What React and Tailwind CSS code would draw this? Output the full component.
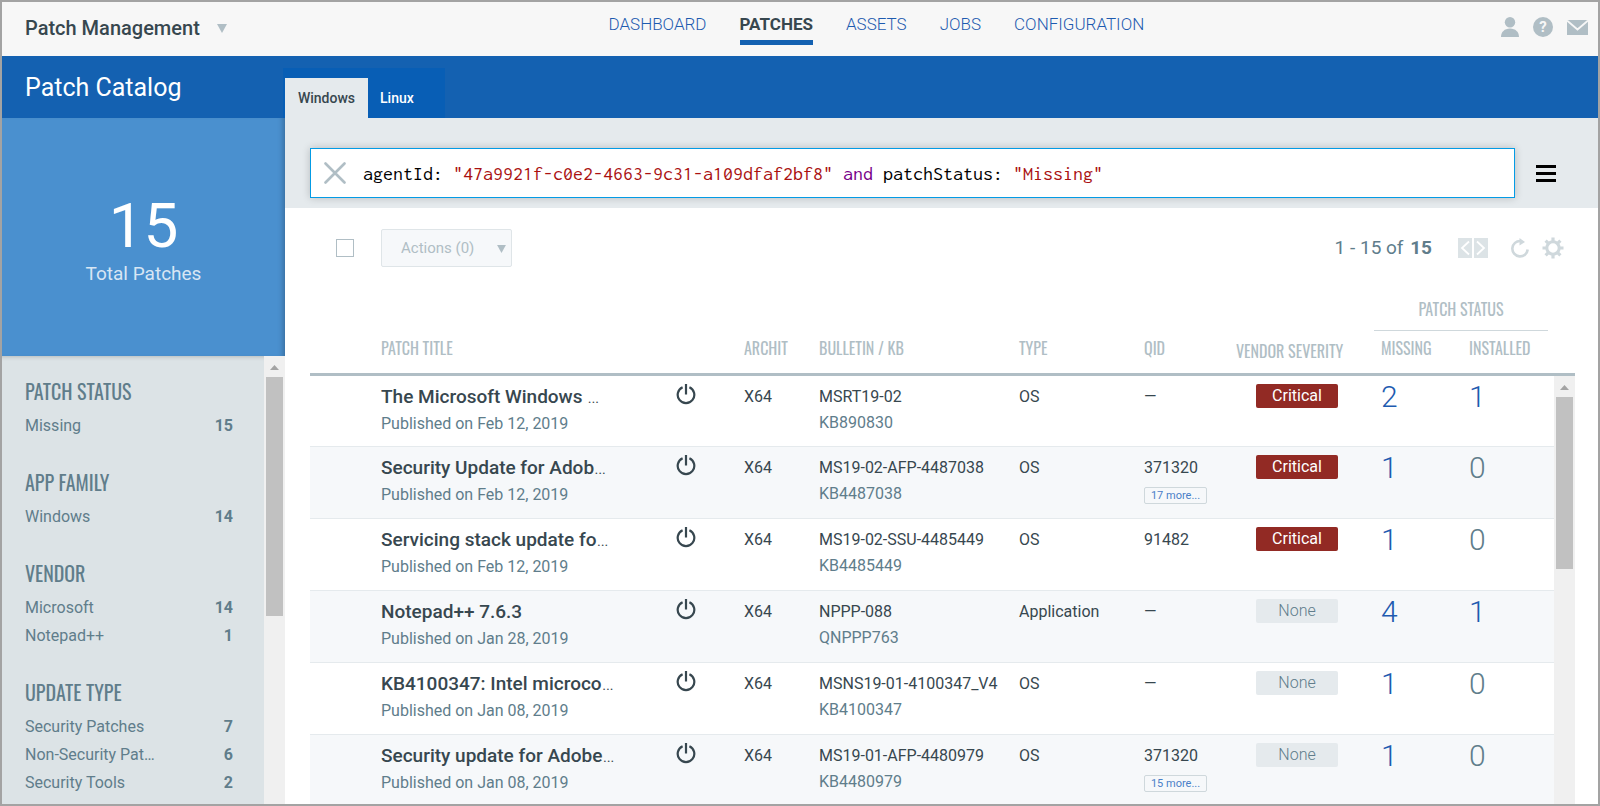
import { useState } from "react";

const navItems = ["DASHBOARD", "PATCHES", "ASSETS", "JOBS", "CONFIGURATION"];

const filters = [
  { title: "PATCH STATUS", items: [["Missing", 15]] },
  { title: "APP FAMILY", items: [["Windows", 14]] },
  { title: "VENDOR", items: [["Microsoft", 14], ["Notepad++", 1]] },
  {
    title: "UPDATE TYPE",
    items: [["Security Patches", 7], ["Non-Security Pat…", 6], ["Security Tools", 2]],
  },
];

const patches = [
  { title: "The Microsoft Windows ", cut: true, date: "Feb 12, 2019", bulletin: "MSRT19-02", kb: "KB890830", type: "OS", qid: "—", severity: "Critical", missing: 2, installed: 1 },
  { title: "Security Update for Adob", cut: true, date: "Feb 12, 2019", bulletin: "MS19-02-AFP-4487038", kb: "KB4487038", type: "OS", qid: "371320", more: 17, severity: "Critical", missing: 1, installed: 0 },
  { title: "Servicing stack update fo", cut: true, date: "Feb 12, 2019", bulletin: "MS19-02-SSU-4485449", kb: "KB4485449", type: "OS", qid: "91482", severity: "Critical", missing: 1, installed: 0 },
  { title: "Notepad++ 7.6.3", date: "Jan 28, 2019", bulletin: "NPPP-088", kb: "QNPPP763", type: "Application", qid: "—", severity: "None", missing: 4, installed: 1 },
  { title: "KB4100347: Intel microco", cut: true, date: "Jan 08, 2019", bulletin: "MSNS19-01-4100347_V4", kb: "KB4100347", type: "OS", qid: "—", severity: "None", missing: 1, installed: 0 },
  { title: "Security update for Adobe", cut: true, date: "Jan 08, 2019", bulletin: "MS19-01-AFP-4480979", kb: "KB4480979", type: "OS", qid: "371320", more: 15, severity: "None", missing: 1, installed: 0 },
];

const narrow = "font-['Oswald','Liberation_Sans_Narrow','Roboto',sans-serif] font-normal";

function Caret({ className }) {
  return (
    <svg viewBox="0 0 10 9" className={className} fill="#b0bec5" aria-hidden="true">
      <path d="M0 0h10L5 9z" />
    </svg>
  );
}

function PowerIcon() {
  return (
    <svg viewBox="0 0 20 21" className="h-[21px] w-5" fill="none" stroke="#37474f" strokeWidth="2.200">
      <path d="M6.600 3.200A8.300 8.300 0 1 0 13.400 3.200" />
      <path d="M10 0v10.500" />
    </svg>
  );
}

function ScrollBar({ thumb }) {
  return (
    <div className="w-[21px] shrink-0 bg-[#f0f0f0]">
      <div className="flex h-[21px] items-center justify-center">
        <svg viewBox="0 0 9 5" className="mt-0.5 h-[5px] w-[9px]" fill="#a3a3a3">
          <path d="M0 5 4.500 0 9 5z" />
        </svg>
      </div>
      <div className={`mx-0.5 bg-[#c1c1c1] ${thumb}`} />
    </div>
  );
}

function Header() {
  return (
    <header className="flex h-[54px] shrink-0 bg-[#f7f7f7]">
      <div className="flex w-[38%] items-center gap-[17px] pb-0.5 pl-[23px]">
        <span className="text-[20px] font-medium text-[#37474f]">Patch Management</span>
        <Caret className="h-[9px] w-[10px]" />
      </div>
      <nav className="flex items-start gap-[33px] pt-3">
        {navItems.map((item) => (
          <a
            key={item}
            href="#"
            className={
              item === "PATCHES"
                ? "h-[31px] border-b-[5px] border-[#1461b1] text-[17px] leading-5 font-bold text-[#37474f]"
                : "text-[17px] leading-5 font-light text-[#1e5bb0]"
            }
          >
            {item}
          </a>
        ))}
      </nav>
      <div className="ml-auto flex items-center gap-[14px] pr-2.5 pb-1">
        <button aria-label="Account">
          <svg viewBox="0 0 18 20" className="h-5 w-[18px]" fill="#b0bec5">
            <circle cx="9" cy="5.200" r="5.200" />
            <path d="M0 20c0-5 3.500-8.500 9-8.500s9 3.500 9 8.500z" />
          </svg>
        </button>
        <button aria-label="Help" className="flex size-5 items-center justify-center rounded-full bg-[#b0bec5] text-[15px] leading-5 font-bold text-[#f7f7f7]">
          ?
        </button>
        <button aria-label="Messages">
          <svg viewBox="0 0 21 15" className="h-[15px] w-[21px]">
            <path d="M0 0h21v15H0z" fill="#b0bec5" />
            <path d="M0 .5 10.500 9.500 21 .5" fill="none" stroke="#f7f7f7" strokeWidth="1.800" />
          </svg>
        </button>
      </div>
    </header>
  );
}

function Sidebar() {
  return (
    <aside className="flex w-[283px] shrink-0 flex-col">
      <div className="flex h-[238px] shrink-0 flex-col items-center bg-[#4a90cf] pt-[76px] shadow-[inset_-6px_0_6px_-5px_rgba(0,0,0,0.3)]">
        <div className="text-[62px] leading-[64px] text-white">15</div>
        <div className="mt-0.5 text-[19px] leading-7 text-[#d8e6f4]">Total Patches</div>
      </div>
      <div className="flex min-h-0 flex-1">
        <div className="min-w-0 flex-1 bg-[#dce3e6] pt-[21px] pr-[31px] pl-[23px] text-[#607d8b] shadow-[inset_0_5px_5px_-5px_rgba(0,0,0,0.25)]">
          {filters.map((group) => (
            <section key={group.title} className="mb-7">
              <h3 className={`mb-[7px] text-[20px] leading-7 ${narrow}`}>{group.title}</h3>
              {group.items.map(([name, count]) => (
                <a key={name} href="#" className="flex h-7 items-center justify-between text-[16px]">
                  <span>{name}</span>
                  <span className="font-bold">{count}</span>
                </a>
              ))}
            </section>
          ))}
        </div>
        <ScrollBar thumb="h-[239px]" />
      </div>
    </aside>
  );
}

function SearchBar() {
  const [query, setQuery] = useState(
    'agentId: "47a9921f-c0e2-4663-9c31-a109dfaf2bf8" and patchStatus: "Missing"'
  );
  // split on quoted values and keywords so they can be coloured
  const parts = query.split(/("[^"]*"|\band\b|\bor\b)/);

  const color = (part) => {
    if (part.startsWith('"')) return "text-[#aa1111]";
    if (part === "and" || part === "or") return "text-[#770088]";
    return "text-black";
  };

  return (
    <div className="flex h-[90px] shrink-0 items-center bg-[#e5eaed] pt-5 pr-[42px] pl-[25px]">
      <div className="flex h-[50px] flex-1 items-center border border-[#039be5] bg-white shadow-[0_0_8px_rgba(0,0,0,0.2)]">
        <button aria-label="Clear" className="ml-[13px]">
          <svg viewBox="0 0 22 22" className="size-[22px]" stroke="#b0bec5" strokeWidth="2.600" strokeLinecap="round">
            <path d="M1.500 1.500l19 19M20.500 1.500l-19 19" />
          </svg>
        </button>
        <div className="relative ml-[17px] h-6 flex-1 font-['Inconsolata','Liberation_Mono',monospace] text-[20px] leading-[26px]">
          <div className="whitespace-pre" aria-hidden="true">
            {parts.map((part, i) => (
              <span key={i} className={color(part)}>{part}</span>
            ))}
          </div>
          <input
            aria-label="Search patches"
            value={query}
            onChange={(e) => setQuery(e.target.value)}
            className="absolute inset-0 w-full bg-transparent text-transparent caret-black outline-none"
          />
        </div>
      </div>
      <button aria-label="Menu" className="ml-[21px] flex w-5 flex-col gap-1">
        <span className="h-[3px] bg-black" />
        <span className="h-[3px] bg-black" />
        <span className="h-[3px] bg-black" />
      </button>
    </div>
  );
}

function Toolbar() {
  return (
    <div className="flex h-20 shrink-0 items-center pr-[34px] pl-[51px]">
      <input
        type="checkbox"
        aria-label="Select all"
        className="size-[18px] appearance-none border border-[#b0bec5] bg-white checked:bg-[#b0bec5]"
      />
      <div className="relative ml-[27px]">
        <select
          aria-label="Actions"
          className="h-[38px] w-[131px] appearance-none rounded-xs border border-[#dfe5e8] bg-[#f6f8fa] pl-[19px] text-[15px] text-[#b0bec5]"
        >
          <option>Actions (0)</option>
        </select>
        <Caret className="pointer-events-none absolute top-4 right-1.5 h-2 w-[9px]" />
      </div>
      <div className="ml-auto text-[19px] text-[#607d8b]">
        1 - 15 of <span className="ml-0.5 font-bold">15</span>
      </div>
      <div className="ml-[26px] flex gap-0.5">
        <button aria-label="Previous page" className="h-5 w-[14px] bg-[#dce3e6]">
          <svg viewBox="0 0 14 20" fill="none" stroke="#fff" strokeWidth="1.800">
            <path d="M11 3.500 4 10l7 6.500" />
          </svg>
        </button>
        <button aria-label="Next page" className="h-5 w-[14px] bg-[#dce3e6]">
          <svg viewBox="0 0 14 20" fill="none" stroke="#fff" strokeWidth="1.800">
            <path d="M3 3.500 10 10l-7 6.500" />
          </svg>
        </button>
      </div>
      <button aria-label="Refresh" className="ml-[22px]">
        <svg viewBox="0 0 20 20" className="size-5">
          <path d="M10.500 3A7.700 7.700 0 1 0 17.700 11.500" fill="none" stroke="#cfd8dc" strokeWidth="2.600" />
          <path d="M9.500 0 15 4l-5.500 3.500z" fill="#cfd8dc" />
        </svg>
      </button>
      <button aria-label="Settings" className="ml-3">
        <svg viewBox="0 0 22 22" className="size-[22px]">
          <circle cx="11" cy="11" r="6.200" fill="none" stroke="#cfd8dc" strokeWidth="3" />
          <path
            d="M11 .5v4M11 17.500v4M.5 11h4M17.500 11h4M3.600 3.600l2.800 2.800M15.600 15.600l2.800 2.800M3.600 18.400l2.800-2.800M15.600 6.400l2.800-2.800"
            stroke="#cfd8dc"
            strokeWidth="3.200"
          />
        </svg>
      </button>
    </div>
  );
}

function Count({ value }) {
  return (
    <a href="#" className={value ? "text-[#1e5bb0]" : "text-[#607d8b]"}>
      {value}
    </a>
  );
}

function PatchTable() {
  return (
    <div className="flex min-h-0 flex-1 overflow-hidden pr-[23px] pl-[25px]">
      <table className="min-w-0 flex-1 table-fixed border-separate border-spacing-0 self-start text-left text-[16px] text-[#37474f]">
        <colgroup>
          <col className="w-[71px]" />
          <col />
          <col className="w-[68px]" />
          <col className="w-[75px]" />
          <col className="w-[200px]" />
          <col className="w-[125px]" />
          <col className="w-[92px]" />
          <col className="w-[138px]" />
          <col className="w-[88px]" />
          <col className="w-[92px]" />
        </colgroup>
        <thead className={`text-[16px] leading-6 text-[#b0bec5] ${narrow}`}>
          <tr>
            <th colSpan="8" className="p-0" />
            <th colSpan="2" scope="colgroup" className="p-0 font-normal">
              <div className="mr-1.5 h-[43px] border-b border-[#cfd8dc] pt-[9px] text-center">PATCH STATUS</div>
            </th>
          </tr>
          <tr className="h-[45px] align-top [&>th]:border-b-[3px] [&>th]:border-[#b0bec5] [&>th]:font-normal">
            <th />
            <th scope="col" className="pt-[5px]">PATCH TITLE</th>
            <th />
            <th scope="col" className="pt-[5px]">ARCHIT</th>
            <th scope="col" className="pt-[5px]">BULLETIN / KB</th>
            <th scope="col" className="pt-[5px]">TYPE</th>
            <th scope="col" className="pt-[5px]">QID</th>
            <th scope="col" className="pt-2">VENDOR SEVERITY</th>
            <th scope="col" className="pt-[5px] pl-[7px]">MISSING</th>
            <th scope="col" className="pt-[5px] pl-[7px]">INSTALLED</th>
          </tr>
        </thead>
        <tbody>
          {patches.map((p) => (
            <tr
              key={p.bulletin}
              className="h-[72px] align-top first:h-[71px] even:bg-[#f6f8fa] [&>td]:border-b [&>td]:border-[#e5eaed] [&>td]:pt-2"
            >
              <td />
              <td>
                <div className="text-[19px] leading-[26px] font-medium">
                  {p.title}
                  {p.cut && <span className="font-light">…</span>}
                </div>
                <div className="leading-7 text-[#607d8b]">Published on {p.date}</div>
              </td>
              <td>
                <PowerIcon />
              </td>
              <td className="leading-[26px]">X64</td>
              <td className="leading-[26px]">
                <div>{p.bulletin}</div>
                <div className="text-[#607d8b]">{p.kb}</div>
              </td>
              <td className="leading-[26px]">{p.type}</td>
              <td className="leading-[26px]">
                <div>{p.qid}</div>
                {p.more && (
                  <button className="mt-1.5 block h-[17px] w-[63px] rounded-xs border border-[#cfd8dc] text-[11px] leading-[15px] text-[#4a80c8]">
                    {p.more} more...
                  </button>
                )}
              </td>
              <td className="pl-5">
                <div
                  className={
                    p.severity === "Critical"
                      ? "h-6 w-[82px] rounded-xs bg-[#922a24] text-center leading-6 text-white"
                      : "h-6 w-[82px] rounded-xs bg-[#e5eaed] text-center leading-6 font-light text-[#607d8b]"
                  }
                >
                  {p.severity}
                </div>
              </td>
              <td className="pl-[7px] text-[30px] leading-[26px] font-light">
                <Count value={p.missing} />
              </td>
              <td className="pl-[7px] text-[30px] leading-[26px] font-light">
                <Count value={p.installed} />
              </td>
            </tr>
          ))}
        </tbody>
      </table>
      <div className="flex flex-col">
        <div className="h-[88px] w-[21px] shrink-0 border-b-[3px] border-[#b0bec5]" />
        <div className="flex flex-1">
          <ScrollBar thumb="h-[172px]" />
        </div>
      </div>
    </div>
  );
}

export default function App() {
  return (
    <div className="flex h-screen flex-col overflow-hidden border-2 border-[#a3a3a3] bg-white font-['Roboto',sans-serif]">
      <Header />

      <div className="flex h-[62px] shrink-0 bg-[#1461b1]">
        <h1 className="w-[281px] pt-0.5 pl-[23px] text-[25px] leading-[60px] text-white">Patch Catalog</h1>
        <div className="mt-3 flex w-[162px] bg-[#085eb5] pt-2.5 pl-0.5 text-[14px] font-medium">
          <button className="w-[83px] bg-[#e5eaed] text-[#37474f]">Windows</button>
          <button className="px-3 text-white">Linux</button>
        </div>
      </div>

      <div className="flex min-h-0 flex-1">
        <Sidebar />
        <main className="flex min-w-0 flex-1 flex-col">
          <SearchBar />
          <Toolbar />
          <PatchTable />
        </main>
      </div>
    </div>
  );
}
